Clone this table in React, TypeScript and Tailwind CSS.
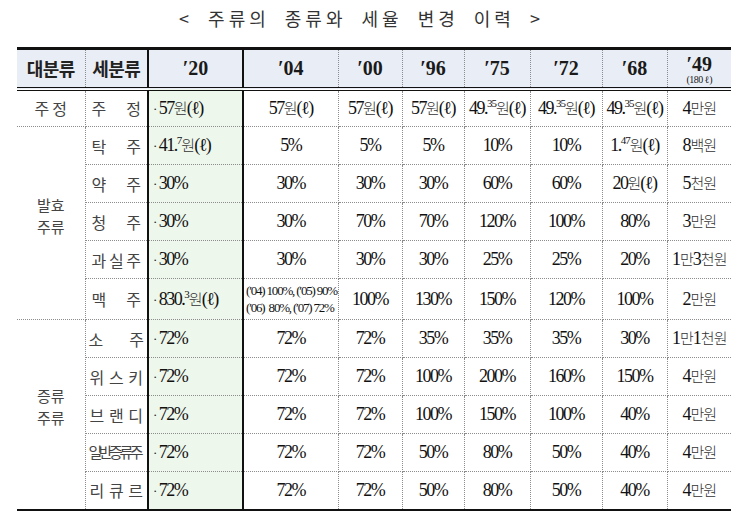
import type { ReactNode } from 'react'

type Row = {
  cat?: { label: string[]; span: number }
  sub: string
  subPad: string
  v20: string
  vals: string[]
}

const ROWS: Row[] = [
  { cat: { label: ['주정'], span: 1 }, sub: '주정', subPad: 'px-[6px]', v20: '57원(ℓ)', vals: ['57원(ℓ)', '57원(ℓ)', '57원(ℓ)', '49.^35^원(ℓ)', '49.^35^원(ℓ)', '49.^35^원(ℓ)', '4만원'] },
  { cat: { label: ['발효', '주류'], span: 5 }, sub: '탁주', subPad: 'px-[6px]', v20: '41.^7^원(ℓ)', vals: ['5%', '5%', '5%', '10%', '10%', '1.^47^원(ℓ)', '8백원'] },
  { sub: '약주', subPad: 'px-[6px]', v20: '30%', vals: ['30%', '30%', '30%', '60%', '60%', '20원(ℓ)', '5천원'] },
  { sub: '청주', subPad: 'px-[6px]', v20: '30%', vals: ['30%', '70%', '70%', '120%', '100%', '80%', '3만원'] },
  { sub: '과실주', subPad: 'px-[6px]', v20: '30%', vals: ['30%', '30%', '30%', '25%', '25%', '20%', '1만3천원'] },
  { sub: '맥주', subPad: 'px-[6px]', v20: '830.^3^원(ℓ)', vals: ['beer', '100%', '130%', '150%', '120%', '100%', '2만원'] },
  { cat: { label: ['증류', '주류'], span: 5 }, sub: '소주', subPad: 'px-[3px]', v20: '72%', vals: ['72%', '72%', '35%', '35%', '35%', '30%', '1만1천원'] },
  { sub: '위스키', subPad: 'px-[4px]', v20: '72%', vals: ['72%', '72%', '100%', '200%', '160%', '150%', '4만원'] },
  { sub: '브랜디', subPad: 'px-[4px]', v20: '72%', vals: ['72%', '72%', '100%', '150%', '100%', '40%', '4만원'] },
  { sub: '일반증류주', subPad: 'px-[3px]', v20: '72%', vals: ['72%', '72%', '50%', '80%', '50%', '40%', '4만원'] },
  { sub: '리큐르', subPad: 'px-[4px]', v20: '72%', vals: ['72%', '72%', '50%', '80%', '50%', '40%', '4만원'] },
]

const YEARS = ['20', '04', '00', '96', '75', '72', '68']
const WIDTHS = ['w-[68px]', 'w-[63px]', 'w-[95px]', 'w-[95px]', 'w-[64px]', 'w-[62px]', 'w-[66px]', 'w-[72px]', 'w-[65px]', 'w-[64px]']

const KR = "font-['Noto_Sans_CJK_KR',sans-serif]"
const SERIF = "font-['Liberation_Serif','Noto_Sans_CJK_KR',serif]"

const cell = 'border border-dotted border-[#8c8c8c] p-0'
const thick = 'border-x-2 border-x-[#111] [border-left-style:solid] [border-right-style:solid]'
const last = 'border-b-2 border-b-[#111] [border-bottom-style:solid]'

function Val({ s }: { s: string }) {
  const parts = s.split('^')
  const out: ReactNode[] = []
  parts.forEach((p, i) => {
    if (i % 2 === 1) {
      out.push(
        <sup key={i} className="text-[11px] -top-[7px] tracking-[-1px]">
          {p}
        </sup>
      )
      return
    }
    p.split(/([가-힣]+)/).forEach((q, j) => {
      if (!q) return
      if (/[가-힣]/.test(q)) {
        out.push(
          <span key={`${i}-${j}`} className={`${KR} text-[15px] font-light tracking-[-1px] text-[#333]`}>
            {q}
          </span>
        )
      } else {
        out.push(<span key={`${i}-${j}`}>{q}</span>)
      }
    })
  })
  return <>{out}</>
}

function Spread({ text, pad }: { text: string; pad: string }) {
  if (text === '일반증류주') {
    return (
      <div className={`${KR} text-[15px] tracking-[-3.5px] text-[#444] whitespace-nowrap pl-[3px]`}>{text}</div>
    )
  }
  return (
    <div className={`flex justify-between ${pad} ${KR} text-[16px] text-[#444]`}>
      {text.split('').map((c, i) => (
        <span key={i}>{c}</span>
      ))}
    </div>
  )
}

export default function App() {
  const head = `${cell} bg-[#e9eef6] border-t-[3px] border-t-[#111] [border-top-style:solid] border-b-4 border-b-[#111] [border-bottom-style:double]`
  return (
    <div className="w-[745px] h-[517px] bg-white overflow-hidden">
      <div className={`h-[47px] pt-[4px] pr-[22px] text-center ${KR} text-[18px] leading-[28px] tracking-[4px] text-[#333] [word-spacing:7px]`}>
        &lt; 주류의 종류와 세율 변경 이력 &gt;
      </div>
      <table className="ml-[17px] w-[714px] table-fixed border-collapse">
        <colgroup>
          {WIDTHS.map((w, i) => (
            <col key={i} className={w} />
          ))}
        </colgroup>
        <thead>
          <tr className="h-[40px]">
            <th className={`${head} border-l-0 ${KR} text-[18px] font-bold text-[#222] tracking-[-0.5px]`}>대분류</th>
            <th className={`${head} ${KR} text-[18px] font-bold text-[#222] tracking-[-0.5px]`}>세분류</th>
            {YEARS.map((y, i) => (
              <th key={y} className={`${head} ${i === 0 ? thick : ''} ${SERIF} text-[20px] font-bold text-[#1a1a1a]`}>
                ′{y}
              </th>
            ))}
            <th className={`${head} border-r-0 ${SERIF} text-[#1a1a1a]`}>
              <div className="flex flex-col items-center pt-[2px]">
                <span className="text-[20px] font-bold leading-[20px]">′49</span>
                <span className="text-[10px] font-normal leading-[11px] tracking-[-0.5px]">(180 ℓ)</span>
              </div>
            </th>
          </tr>
        </thead>
        <tbody>
          {ROWS.map((r, ri) => {
            const isLast = ri === ROWS.length - 1
            const b = isLast ? last : ''
            return (
              <tr key={r.sub} className={r.sub === '맥주' ? 'h-[41px]' : 'h-[38px]'}>
                {r.cat && (
                  <td
                    rowSpan={r.cat.span}
                    className={`${cell} border-l-0 ${ri + r.cat.span === ROWS.length ? last : ''} ${KR} text-[16px] text-[#444] text-center`}
                  >
                    {r.cat.label.length === 1 ? (
                      <span className="tracking-[3px] pl-[3px]">{r.cat.label[0]}</span>
                    ) : (
                      <div className="flex flex-col items-center text-[15px] leading-[22px] -mt-[14px]">
                        {r.cat.label.map((l) => (
                          <span key={l}>{l}</span>
                        ))}
                      </div>
                    )}
                  </td>
                )}
                <td className={`${cell} ${b}`}>
                  <Spread text={r.sub} pad={r.subPad} />
                </td>
                <td className={`${cell} ${thick} ${b} bg-[#eef7ec] text-left pl-[4px] ${SERIF} text-[18px] tracking-[-1.5px] text-[#111] whitespace-nowrap`}>
                  <span className="text-[13px] pr-[3px] relative -top-[1px]">·</span>
                  <Val s={r.v20} />
                </td>
                {r.vals.map((v, vi) => (
                  <td
                    key={vi}
                    className={`${cell} ${b} ${vi === r.vals.length - 1 ? 'border-r-0' : ''} text-center ${SERIF} text-[18px] tracking-[-1.5px] text-[#111] whitespace-nowrap`}
                  >
                    {v === 'beer' ? (
                      <div className="text-[13px] leading-[17px] tracking-[-1.2px] pl-[2px] text-left">
                        <div>(′04) 100%, (′05) 90%</div>
                        <div>(′06)&nbsp;&nbsp;80%, (′07) 72%</div>
                      </div>
                    ) : vi === r.vals.length - 1 ? (
                      <span className="tracking-[-1px]">
                        <Val s={v} />
                      </span>
                    ) : (
                      <Val s={v} />
                    )}
                  </td>
                ))}
              </tr>
            )
          })}
        </tbody>
      </table>
    </div>
  )
}
